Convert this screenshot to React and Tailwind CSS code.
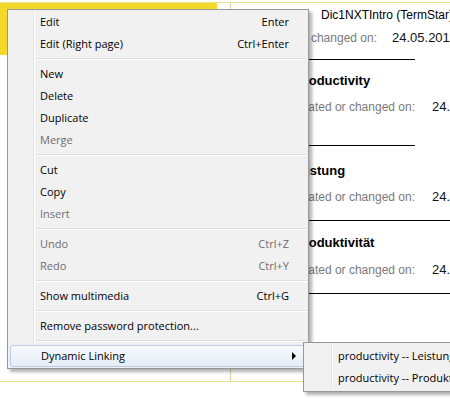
// App.jsx
const menuItems = [
    { label: 'Edit', shortcut: 'Enter' },
    { label: 'Edit (Right page)', shortcut: 'Ctrl+Enter' },
    { sep: true },
    { label: 'New' },
    { label: 'Delete' },
    { label: 'Duplicate' },
    { label: 'Merge', disabled: true },
    { sep: true },
    { label: 'Cut' },
    { label: 'Copy' },
    { label: 'Insert', disabled: true },
    { sep: true },
    { label: 'Undo', shortcut: 'Ctrl+Z', disabled: true },
    { label: 'Redo', shortcut: 'Ctrl+Y', disabled: true },
    { sep: true },
    { label: 'Show multimedia', shortcut: 'Ctrl+G' },
    { sep: true },
    { label: 'Remove password protection...' },
    { sep: true },
    { label: 'Dynamic Linking', submenu: true, active: true },
];

function MenuRow({ item }) {
    if (item.sep) {
        return (
            <div className="h-[8px] flex flex-col justify-center ml-[27px] mr-[1px]">
                <div className="h-px bg-[#e0e0e0]" />
                <div className="h-px bg-white" />
            </div>
        );
    }
    const color = item.disabled ? 'text-[#6d6d6d]' : 'text-black';
    return (
        <div
            className={`h-[22px] mx-[2px] flex items-center justify-between pl-[30px] ${
                item.submenu ? 'pr-[9px]' : 'pr-[17px]'
            } ${color} ${
                item.active
                    ? 'border border-[#b9cde5] rounded-[3px] bg-gradient-to-b from-[#f8fafd] to-[#e5ecf6] pl-[29px]'
                    : ''
            }`}
        >
            <span>{item.label}</span>
            {item.shortcut && <span>{item.shortcut}</span>}
            {item.submenu && (
                <span className="w-0 h-0 border-y-[4px] border-y-transparent border-l-[4px] border-l-black" />
            )}
        </div>
    );
}

function InfoRow({ label, labelWidth, gap, date, className = '' }) {
    return (
        <div className={`h-[22px] flex items-center ${className}`}>
            <div
                className="shrink-0 flex justify-end overflow-hidden text-[#7a7a7a] whitespace-nowrap"
                style={{ width: labelWidth }}
            >
                <span className="shrink-0">{label}</span>
            </div>
            <span className="shrink-0 text-[13px] text-[#111]" style={{ marginLeft: gap }}>
                {date}
            </span>
        </div>
    );
}

export default function App() {
    return (
        <div className="relative w-[450px] h-[399px] bg-white overflow-hidden font-['Liberation_Sans',Arial,sans-serif] text-[12px]">
            {/* page behind the menu */}
            <div className="mt-[2px] h-[380px] border-y border-[#ede38f] flex">
                <div className="w-[231px] shrink-0 border-r border-[#d8d19e]">
                    <div className="h-[52px] w-[217px] bg-[#f3d92c]" />
                </div>
                <div className="flex-1 min-w-0 overflow-hidden whitespace-nowrap">
                    <div className="h-[24px] flex items-center pl-[90px] text-black">Dic1NXTIntro (TermStar)</div>
                    <InfoRow label="Last changed on:" labelWidth={146} gap={15} date="24.05.2011" />
                    <div className="mt-[10px] h-px w-[184px] bg-black" />
                    <div className="mt-[10px] h-[22px] flex items-center pl-[64px] font-bold text-[13px]">Productivity</div>
                    <InfoRow className="mt-[4px]" label="Term created or changed on:" labelWidth={184} gap={17} date="24.05.2011" />
                    <div className="mt-[27px] h-px w-[184px] bg-black" />
                    <div className="mt-[14px] h-[22px] flex items-center pl-[60px] font-bold text-[13px]">Leistung</div>
                    <InfoRow className="mt-[4px]" label="Term created or changed on:" labelWidth={184} gap={17} date="24.05.2011" />
                    <div className="mt-[12px] h-px bg-black" />
                    <div className="mt-[11px] h-[22px] flex items-center pl-[64px] font-bold text-[13px]">Produktivität</div>
                    <InfoRow className="mt-[5px]" label="Term created or changed on:" labelWidth={184} gap={17} date="24.05.2011" />
                    <div className="mt-[12px] h-px bg-black" />
                </div>
            </div>

            {/* context menu */}
            <div className="absolute left-[7px] top-[9px] w-[302px] border border-[#979797] bg-[#f2f1f2] py-[1px] shadow-[3px_3px_3px_rgba(0,0,0,0.3)] font-['Open_Sans','Noto_Sans',sans-serif] text-[11px]">
                <div className="absolute left-[25px] top-[2px] bottom-[2px] w-[2px] border-l border-[#e4e4e4] border-r border-r-white" />
                <div className="relative">
                    {menuItems.map((item, i) => (
                        <MenuRow key={i} item={item} />
                    ))}
                </div>
            </div>

            {/* submenu */}
            <div className="absolute left-[303px] top-[342px] w-[170px] border border-[#979797] bg-[#f2f1f2] py-[2px] shadow-[3px_3px_3px_rgba(0,0,0,0.3)] font-['Open_Sans','Noto_Sans',sans-serif] text-[11px] whitespace-nowrap">
                <div className="absolute left-[27px] top-[2px] bottom-[2px] w-[2px] border-l border-[#e4e4e4] border-r border-r-white" />
                <div className="relative">
                    <div className="h-[22px] flex items-center pl-[34px] text-black">productivity -- Leistung</div>
                    <div className="h-[22px] flex items-center pl-[34px] text-black">productivity -- Produktivität</div>
                </div>
            </div>
        </div>
    );
}
